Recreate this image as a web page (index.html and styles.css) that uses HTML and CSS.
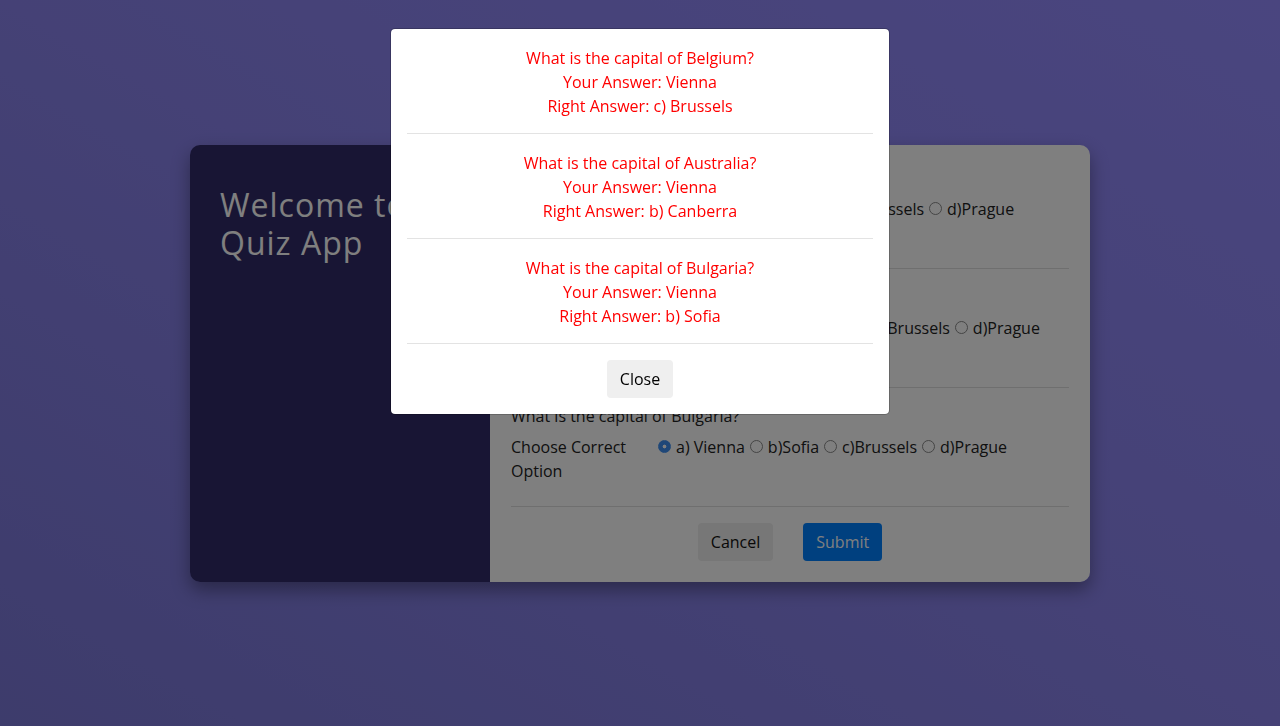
FILE: index.html
```html
<!DOCTYPE html>
<html lang="en">
<head>
<meta charset="utf-8">
<title>Quiz App</title>
<link rel="stylesheet" href="styles.css">
</head>
<body>
<main class="page">
  <div class="card">
    <aside class="intro">
      <h2 class="intro-title">Welcome to Quiz App</h2>
    </aside>
    <form class="quiz">
      <div class="question">
        <p class="q-text">What is the capital of Belgium?</p>
        <div class="q-row">
          <span class="q-label">Choose Correct Option</span>
          <div class="options">
            <label class="opt"><input type="radio" name="q1" checked>a) Vienna</label>
            <label class="opt"><input type="radio" name="q1">b)Berlin</label>
            <label class="opt"><input type="radio" name="q1">c)Brussels</label>
            <label class="opt"><input type="radio" name="q1">d)Prague</label>
          </div>
        </div>
      </div>
      <div class="question">
        <p class="q-text">What is the capital of Australia?</p>
        <div class="q-row">
          <span class="q-label">Choose Correct Option</span>
          <div class="options">
            <label class="opt"><input type="radio" name="q2" checked>a) Vienna</label>
            <label class="opt"><input type="radio" name="q2">b)Canberra</label>
            <label class="opt"><input type="radio" name="q2">c)Brussels</label>
            <label class="opt"><input type="radio" name="q2">d)Prague</label>
          </div>
        </div>
      </div>
      <div class="question">
        <p class="q-text">What is the capital of Bulgaria?</p>
        <div class="q-row">
          <span class="q-label">Choose Correct Option</span>
          <div class="options">
            <label class="opt"><input type="radio" name="q3" checked>a) Vienna</label>
            <label class="opt"><input type="radio" name="q3">b)Sofia</label>
            <label class="opt"><input type="radio" name="q3">c)Brussels</label>
            <label class="opt"><input type="radio" name="q3">d)Prague</label>
          </div>
        </div>
      </div>
      <div class="actions">
        <button type="button" class="btn btn-cancel">Cancel</button>
        <button type="button" class="btn btn-submit">Submit</button>
      </div>
    </form>
  </div>
</main>

<div class="backdrop"></div>

<div class="modal">
  <div class="modal-content">
    <p class="entry">What is the capital of Belgium?<br>Your Answer: Vienna<br>Right Answer: c) Brussels</p>
    <p class="entry">What is the capital of Australia?<br>Your Answer: Vienna<br>Right Answer: b) Canberra</p>
    <p class="entry">What is the capital of Bulgaria?<br>Your Answer: Vienna<br>Right Answer: b) Sofia</p>
    <button type="button" class="btn btn-close">Close</button>
  </div>
</div>
</body>
</html>
```

FILE: styles.css
```css
* { box-sizing: border-box; }

html, body { height: 100%; }

body {
  margin: 0;
  font-family: "Open Sans", "Noto Sans", sans-serif;
  font-size: 16px;
  line-height: 24px;
  color: #222;
  background: linear-gradient(to top right, #7b78d8 0%, #8a83ec 50%, #948bff 100%);
}

.page {
  min-height: 100vh;
  display: flex;
  align-items: center;
  justify-content: center;
}

.card {
  width: 900px;
  display: flex;
  border-radius: 10px;
  overflow: hidden;
  box-shadow: 0 8px 18px rgba(0, 0, 0, 0.35);
}

.intro {
  width: 300px;
  flex: none;
  background: #302a68;
  padding: 41px 30px 40px;
  color: #fff;
}

.intro-title {
  margin: 0;
  font-size: 32px;
  line-height: 38px;
  font-weight: 400;
  letter-spacing: 1px;
}

.quiz {
  flex: 1;
  background: #fff;
  padding: 5px 21px 21px;
}

.question {
  padding: 16px 0 23px;
  border-bottom: 1px solid #dedede;
}

.q-text {
  margin: 0 0 7px;
}

.q-row {
  display: grid;
  grid-template-columns: 147px 1fr;
}

.q-label {
  padding-right: 20px;
}

.options {
  display: flex;
  flex-wrap: wrap;
  align-items: flex-start;
}

.opt {
  display: inline-flex;
  align-items: center;
  margin-right: 5px;
}

.opt input {
  appearance: none;
  -webkit-appearance: none;
  width: 13px;
  height: 13px;
  margin: 0 5px 0 0;
  border: 1px solid #8a8a8a;
  border-radius: 50%;
  background: #fff;
}

.opt input:checked {
  border-color: #3f8ff0;
  background: radial-gradient(circle, #fff 0 1.6px, #3f8ff0 2.2px);
}

.actions {
  display: flex;
  justify-content: center;
  gap: 30px;
  padding-top: 16px;
}

.btn {
  font-family: inherit;
  font-size: 16px;
  line-height: 24px;
  padding: 7px 13px;
  border: 0;
  border-radius: 4px;
  color: #111;
  background: #eeeeee;
}

.btn-submit {
  background: #0080ff;
  color: #fff;
}

.backdrop {
  position: fixed;
  inset: 0;
  background: rgba(0, 0, 0, 0.5);
}

.modal {
  position: fixed;
  inset: 0;
  display: flex;
  justify-content: center;
  align-items: flex-start;
  padding-top: 28px;
}

.modal-content {
  width: 500px;
  background: #fff;
  background-clip: padding-box;
  border: 1px solid rgba(0, 0, 0, 0.2);
  border-radius: 5px;
  padding: 0 16px 16px;
  text-align: center;
}

.entry {
  margin: 0;
  padding: 17px 0 15px;
  border-bottom: 1px solid #e3e3e3;
  color: #ff0000;
}

.btn-close {
  margin-top: 16px;
  background: #efefef;
  color: #000;
}
```
